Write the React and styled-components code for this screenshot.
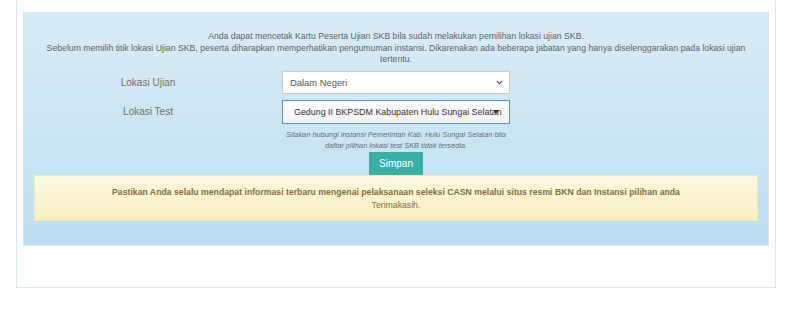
import React from 'react';
import styled, { createGlobalStyle } from 'styled-components';

const GlobalStyle = createGlobalStyle`
  html, body {
    margin: 0;
    padding: 0;
    background: #ffffff;
    font-family: "Liberation Sans", Arial, sans-serif;
  }
`;

const Page = styled.div`
  padding: 0 16px;
`;

const Card = styled.div`
  border: 1px solid #d6ebef;
  border-top: none;
  padding: 12px 6px 41px;
  background: #ffffff;
`;

const InfoPanel = styled.div`
  background: linear-gradient(to bottom, #d9ecf6 0%, #bcdff1 100%);
  border: 1px solid #d3e9f3;
  padding: 18px 10px 24px;
`;

const Intro = styled.p`
  margin: 0 0 5px;
  text-align: center;
  font-size: 8.7px;
  line-height: 11.5px;
  color: #5e6468;
`;

const FormRow = styled.div`
  display: grid;
  grid-template-columns: 228px 228px;
  column-gap: 20px;
  align-items: center;
  margin-bottom: ${(p) => p.$gap || 0}px;
`;

const Label = styled.label`
  text-align: center;
  font-size: 10px;
  color: #707070;
  margin-top: ${(p) => p.$shift || 0}px;
  align-self: ${(p) => (p.$top ? 'start' : 'center')};
`;

const SelectBox = styled.div`
  position: relative;
  height: 23px;
  box-sizing: border-box;
  border: 1px solid #c9cdd0;
  background: #ffffff;
  display: flex;
  align-items: center;
  padding: 0 7px;
  font-size: 9.4px;
  color: #555555;
`;

const Chevron = styled.svg`
  position: absolute;
  right: 6px;
  top: 8px;
`;

const PickButton = styled.div`
  position: relative;
  align-self: stretch;
  height: 24px;
  box-sizing: border-box;
  border: 1px solid #5f96ad;
  background: linear-gradient(to bottom, #ffffff 0%, #f3f3f3 100%);
  box-shadow: inset 0 1px 2px rgba(0, 0, 0, 0.08);
  display: flex;
  align-items: center;
  padding: 0 6px 0 11px;
  font-size: 8.9px;
  color: #333333;
  white-space: nowrap;
  overflow: hidden;
`;

const Caret = styled.span`
  position: absolute;
  right: 10px;
  top: 9px;
  width: 0;
  height: 0;
  border-left: 3px solid transparent;
  border-right: 3px solid transparent;
  border-top: 4px solid #333333;
`;

const Column = styled.div`
  display: flex;
  flex-direction: column;
  align-items: center;
`;

const Help = styled.p`
  margin: 5px 0 1px;
  text-align: center;
  font-size: 7.4px;
  font-style: italic;
  line-height: 11px;
  color: #6a6f73;
`;

const SaveButton = styled.button`
  width: 54px;
  height: 23px;
  border: none;
  background: #3aafa6;
  color: #ffffff;
  font-family: "Liberation Sans", Arial, sans-serif;
  font-size: 10px;
  padding: 0;
  cursor: pointer;
`;

const Notice = styled.div`
  background: linear-gradient(to bottom, #fcf8e3 0%, #f8efc0 100%);
  border: 1px solid #f5e9b8;
  padding: 10px 10px 8px;
  text-align: center;
  font-size: 8.7px;
  line-height: 13px;
  color: #8a6d3b;
`;

const Strong = styled.div`
  font-weight: bold;
`;

export default function App() {
  return (
    <>
      <GlobalStyle />
      <Page>
        <Card>
          <InfoPanel>
            <Intro>
              Anda dapat mencetak Kartu Peserta Ujian SKB bila sudah melakukan pemilihan lokasi ujian SKB.
              <br />
              Sebelum memilih titik lokasi Ujian SKB, peserta diharapkan memperhatikan pengumuman instansi. Dikarenakan ada beberapa jabatan yang hanya diselenggarakan pada lokasi ujian tertentu.
            </Intro>

            <FormRow $gap={6}>
              <Label>Lokasi Ujian</Label>
              <SelectBox>
                Dalam Negeri
                <Chevron width="7" height="5" viewBox="0 0 7 5">
                  <path d="M0.8 0.8 L3.5 3.6 L6.2 0.8" fill="none" stroke="#555" strokeWidth="1.1" />
                </Chevron>
              </SelectBox>
            </FormRow>

            <FormRow>
              <Label $top $shift={6}>Lokasi Test</Label>
              <Column>
                <PickButton>
                  Gedung II BKPSDM Kabupaten Hulu Sungai Selatan
                  <Caret />
                </PickButton>
                <Help>
                  Silakan hubungi instansi Pemerintah Kab. Hulu Sungai Selatan bila
                  <br />
                  daftar pilihan lokasi test SKB tidak tersedia.
                </Help>
                <SaveButton>Simpan</SaveButton>
              </Column>
            </FormRow>

            <Notice>
              <Strong>
                Pastikan Anda selalu mendapat informasi terbaru mengenai pelaksanaan seleksi CASN melalui situs resmi BKN dan Instansi pilihan anda
              </Strong>
              Terimakasih.
            </Notice>
          </InfoPanel>
        </Card>
      </Page>
    </>
  );
}
